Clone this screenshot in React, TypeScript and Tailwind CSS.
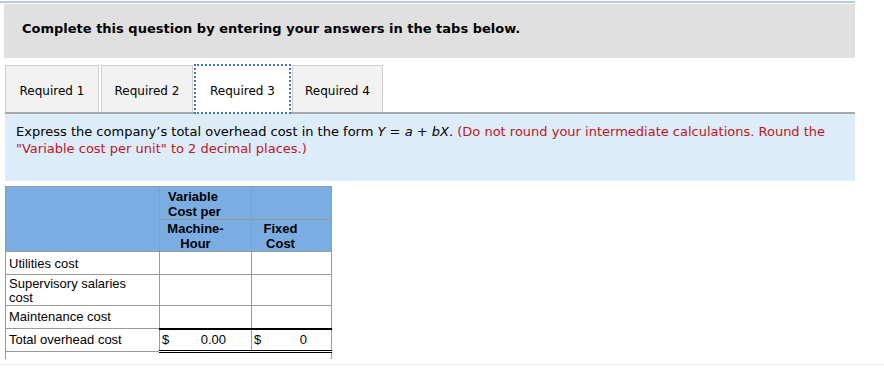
import React from "react"

const verdana = { fontFamily: '"DejaVu Sans", Verdana, sans-serif' }
const arial = { fontFamily: '"Liberation Sans", Arial, sans-serif' }

const tabs = [
  { label: "Required 1", w: "w-[94px]" },
  { label: "Required 2", w: "w-[92px]" },
  { label: "Required 3", w: "w-[97px]" },
  { label: "Required 4", w: "w-[91px]" },
]

export default function App() {
  return (
    <div className="relative h-[369px] w-[884px] overflow-hidden bg-white" style={verdana}>
      <div className="ml-0 mt-[1px] h-[2px] w-[855px] bg-[#b7c9de]" />
      <div className="ml-[4px] mt-[1px] h-[54px] w-[851px] bg-[#e0e0e0] pl-[18px] pt-[17px]">
        <p className="text-[13px] font-bold leading-[16px] text-black">
          Complete this question by entering your answers in the tabs below.
        </p>
      </div>

      <div className="ml-[5px] mt-[8px] flex h-[48px] w-[850px] items-end border-b-2 border-[#a8a8a8]">
        {tabs.map((t, i) => {
          const active = t.label === "Required 3"
          return (
            <div
              key={t.label}
              className={
                (i === 0 ? "" : active ? "ml-[1px] " : i === 3 ? "ml-[1px] " : "ml-[2px] ") +
                t.w +
                (active
                  ? " -mb-[2px] flex h-[50px] items-center justify-center border-2 border-dotted border-[#3a78c3] bg-white pt-[3px] text-[12px] text-black"
                  : " flex h-[47px] items-center justify-center border border-b-0 border-[#cfcfcf] bg-[#f2f2f2] pt-[3px] text-[12px] text-black")
              }
            >
              {t.label}
            </div>
          )
        })}
      </div>

      <div className="ml-[5px] h-[67px] w-[850px] bg-[#dcecf9] px-[11px] pt-[9px] text-[13px] leading-[17px]">
        <span className="text-black">
          Express the company’s total overhead cost in the form <i>Y</i> = <i>a</i> + <i>bX</i>.{" "}
        </span>
        <span className="text-[#c0161e]">
          (Do not round your intermediate calculations. Round the "Variable cost per unit" to 2 decimal places.)
        </span>
      </div>

      <table className="ml-[5px] mt-[5px] border-collapse text-[13px] text-black" style={arial}>
        <colgroup>
          <col className="w-[154px]" />
          <col className="w-[92px]" />
          <col className="w-[80px]" />
        </colgroup>
        <thead>
          <tr className="h-[32px] bg-[#7aaee3]">
            <th rowSpan={2} className="border border-[#9a9a9a]" />
            <th className="border border-[#9a9a9a] pl-[8px] pt-[2px] text-left align-top font-bold leading-[15px]">
              Variable
              <br />
              Cost per
            </th>
            <th className="border border-[#9a9a9a]" />
          </tr>
          <tr className="h-[32px] bg-[#7aaee3]">
            <th className="border border-[#9a9a9a] pr-[20px] pt-[1px] text-center align-top font-bold leading-[15px]">
              Machine-
              <br />
              Hour
            </th>
            <th className="border border-[#9a9a9a] pr-[22px] pt-[1px] text-center align-top font-bold leading-[15px]">
              Fixed
              <br />
              Cost
            </th>
          </tr>
        </thead>
        <tbody>
          <tr className="h-[23px]">
            <td className="border border-[#9a9a9a] pl-[3px] leading-[15px]">Utilities cost</td>
            <td className="border border-[#9a9a9a]" />
            <td className="border border-[#9a9a9a]" />
          </tr>
          <tr className="h-[31px]">
            <td className="border border-[#9a9a9a] pl-[3px] pt-[1px] leading-[14px]">
              Supervisory salaries
              <br />
              cost
            </td>
            <td className="border border-[#9a9a9a]" />
            <td className="border border-[#9a9a9a]" />
          </tr>
          <tr className="h-[23px]">
            <td className="border border-[#9a9a9a] pl-[3px]">Maintenance cost</td>
            <td className="border border-[#9a9a9a]" />
            <td className="border border-[#9a9a9a]" />
          </tr>
          <tr className="h-[23px]">
            <td className="border border-[#9a9a9a] pl-[3px]">Total overhead cost</td>
            <td className="border-x border-t-2 border-b-[3px] border-double border-x-[#9a9a9a] border-t-black border-b-black px-[2px]">
              <div className="flex justify-between pr-[23px]">
                <span>$</span>
                <span>0.00</span>
              </div>
            </td>
            <td className="border-x border-t-2 border-b-[3px] border-double border-x-[#9a9a9a] border-t-black border-b-black px-[2px]">
              <div className="flex justify-between pr-[22px]">
                <span>$</span>
                <span>0</span>
              </div>
            </td>
          </tr>
          <tr className="h-[7px]">
            <td className="border-l border-[#9a9a9a]" />
            <td />
            <td className="border-r border-[#9a9a9a]" />
          </tr>
        </tbody>
      </table>
      <div className="mt-[5px] h-[1px] w-[884px] bg-[#ececec]" />
    </div>
  )
}
